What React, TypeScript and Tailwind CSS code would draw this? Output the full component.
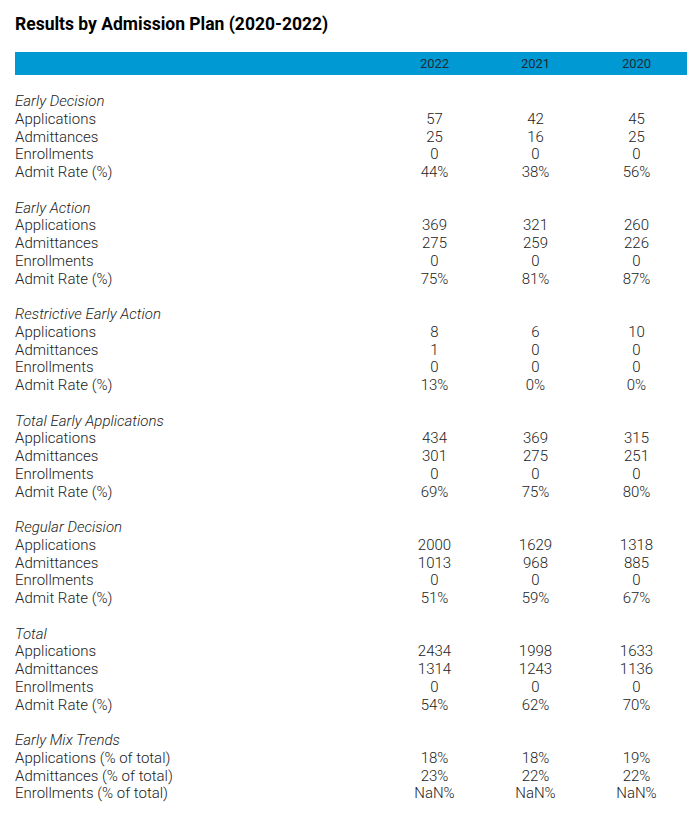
const years = ["2022", "2021", "2020"];

interface Row {
  label: string;
  values: string[];
}

interface Section {
  title: string;
  rows: Row[];
}

const std = (a: string[], b: string[], c: string[], d: string[]): Row[] => [
  { label: "Applications", values: a },
  { label: "Admittances", values: b },
  { label: "Enrollments", values: c },
  { label: "Admit Rate (%)", values: d },
];

const sections: Section[] = [
  { title: "Early Decision", rows: std(["57", "42", "45"], ["25", "16", "25"], ["0", "0", "0"], ["44%", "38%", "56%"]) },
  { title: "Early Action", rows: std(["369", "321", "260"], ["275", "259", "226"], ["0", "0", "0"], ["75%", "81%", "87%"]) },
  { title: "Restrictive Early Action", rows: std(["8", "6", "10"], ["1", "0", "0"], ["0", "0", "0"], ["13%", "0%", "0%"]) },
  { title: "Total Early Applications", rows: std(["434", "369", "315"], ["301", "275", "251"], ["0", "0", "0"], ["69%", "75%", "80%"]) },
  { title: "Regular Decision", rows: std(["2000", "1629", "1318"], ["1013", "968", "885"], ["0", "0", "0"], ["51%", "59%", "67%"]) },
  { title: "Total", rows: std(["2434", "1998", "1633"], ["1314", "1243", "1136"], ["0", "0", "0"], ["54%", "62%", "70%"]) },
  {
    title: "Early Mix Trends",
    rows: [
      { label: "Applications (% of total)", values: ["18%", "18%", "19%"] },
      { label: "Admittances (% of total)", values: ["23%", "22%", "22%"] },
      { label: "Enrollments (% of total)", values: ["NaN%", "NaN%", "NaN%"] },
    ],
  },
];

function DataRow({ row }: { row: Row }) {
  return (
    <div className="grid grid-cols-[1fr_101px_101px_101px] leading-[17.75px]">
      <div>{row.label}</div>
      {row.values.map((v, i) => (
        <div key={i} className="text-center">
          {v}
        </div>
      ))}
    </div>
  );
}

export default function App() {
  return (
    <div className="min-h-screen bg-white pl-[15px] pr-[6px] pt-[12px] font-['Roboto',sans-serif] text-[#222]">
      <h1 className="text-[17.5px] font-bold leading-[24px] text-black">Results by Admission Plan (2020-2022)</h1>
      <div className="mt-[16px] grid h-[23px] grid-cols-[1fr_101px_101px_101px] items-center bg-[#0099d4] text-[13px] text-[#1e2a35]">
        <div />
        {years.map((y) => (
          <div key={y} className="text-center">
            {y}
          </div>
        ))}
      </div>
      <div className="mt-[18px] text-[15px] font-light">
        {sections.map((s) => (
          <div key={s.title} className="mb-[17.75px]">
            <div className="italic leading-[17.75px]">{s.title}</div>
            {s.rows.map((r) => (
              <DataRow key={r.label} row={r} />
            ))}
          </div>
        ))}
      </div>
    </div>
  );
}
